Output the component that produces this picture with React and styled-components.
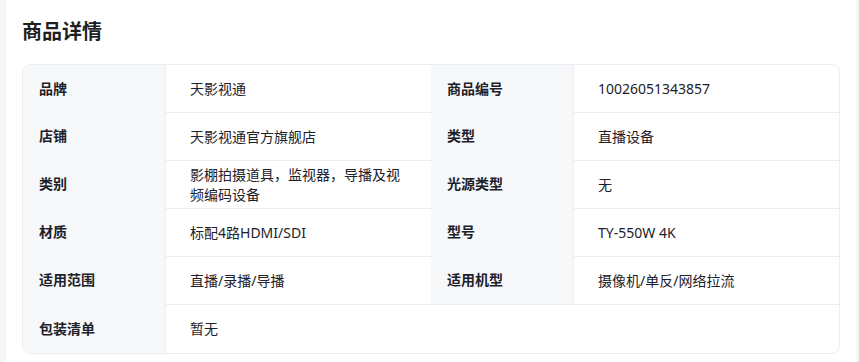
import React from 'react';
import styled, { createGlobalStyle } from 'styled-components';

const GlobalStyle = createGlobalStyle`
  html, body {
    margin: 0;
    padding: 0;
    background: #f5f6f8;
    overflow: hidden;
  }
  * {
    box-sizing: border-box;
  }
`;

const Panel = styled.section`
  width: 850px;
  margin-left: 6px;
  min-height: 380px;
  background: #fff;
  padding: 18px 16px 16px;
  font-family: "Noto Sans", "Noto Sans CJK SC", sans-serif;
  color: #1d2129;
`;

const Title = styled.h2`
  margin: 0 0 18px;
  font-size: 20px;
  line-height: 28px;
  font-weight: 700;
  color: #1f1f1f;
`;

const Table = styled.div`
  display: grid;
  grid-template-columns: 143px 1fr 143px 1fr;
  grid-template-rows: 47px repeat(4, 48px) 49px;
  border: 1px solid #ebedf0;
  border-radius: 8px;
  overflow: hidden;
`;

const Label = styled.div`
  display: flex;
  align-items: center;
  padding: 0 16px;
  background: #f7f8fa;
  border-right: 1px solid #ebedf0;
  font-size: 14px;
  line-height: 20px;
  font-weight: 700;
  color: #1d2129;
`;

const Value = styled.div`
  display: flex;
  align-items: center;
  padding: 0 24px;
  font-size: 14px;
  line-height: 20px;
  color: #1d2129;
  border-top: ${(p) => (p.$first ? 'none' : '1px solid #ebedf0')};
  grid-column: ${(p) => (p.$wide ? 'span 3' : 'auto')};
`;

const rows = [
  ['品牌', '天影视通', '商品编号', '10026051343857'],
  ['店铺', '天影视通官方旗舰店', '类型', '直播设备'],
  ['类别', '影棚拍摄道具，监视器，导播及视频编码设备', '光源类型', '无'],
  ['材质', '标配4路HDMI/SDI', '型号', 'TY-550W 4K'],
  ['适用范围', '直播/录播/导播', '适用机型', '摄像机/单反/网络拉流'],
];

function App() {
  return (
    <>
      <GlobalStyle />
      <Panel>
        <Title>商品详情</Title>
        <Table>
          {rows.map(([l1, v1, l2, v2], i) => (
            <React.Fragment key={l1}>
              <Label>{l1}</Label>
              <Value $first={i === 0}>{v1}</Value>
              <Label>{l2}</Label>
              <Value $first={i === 0}>{v2}</Value>
            </React.Fragment>
          ))}
          <Label>包装清单</Label>
          <Value $wide>暂无</Value>
        </Table>
      </Panel>
    </>
  );
}

export default App;
